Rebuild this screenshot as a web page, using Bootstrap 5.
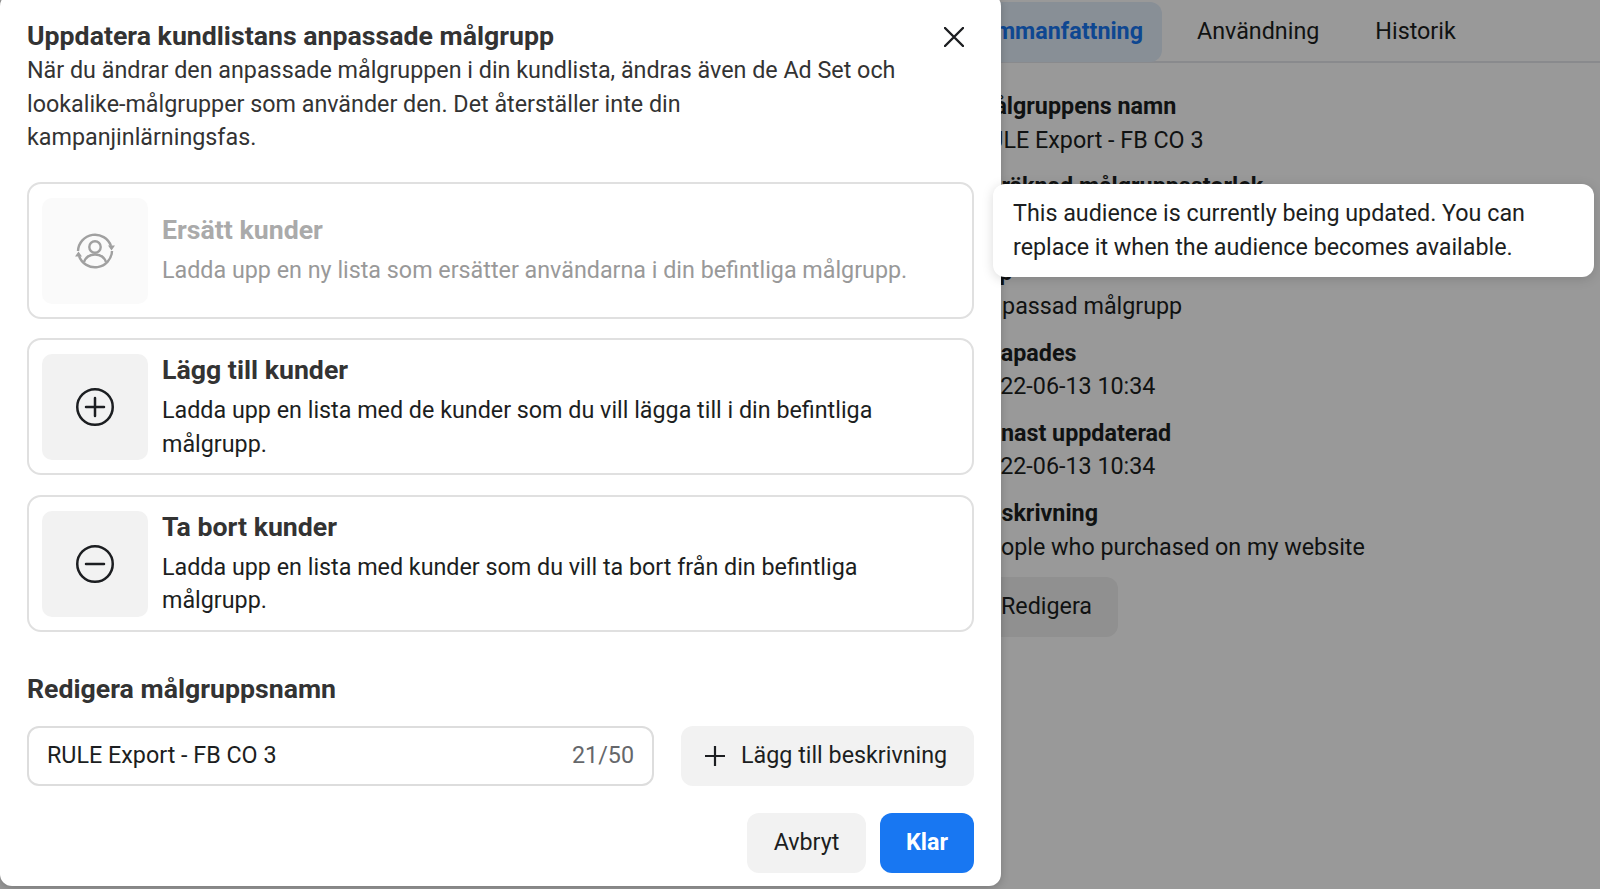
<!DOCTYPE html>
<html lang="sv">
<head>
<meta charset="utf-8">
<title>Uppdatera kundlista</title>
<link href="https://cdn.jsdelivr.net/npm/bootstrap@5.3.0/dist/css/bootstrap.min.css" rel="stylesheet">
<style>
html,body{height:100%;overflow:hidden}
body{font-family:Roboto,"Liberation Sans",sans-serif;font-size:23.3px;line-height:33.6px;color:#1c1e21;background:#fff}
.stage{position:relative;width:1600px;height:889px;overflow:hidden}
.behind{padding-left:974px}
.tabbar{height:63px;border-bottom:2px solid #e4e6eb;padding-top:2px;margin-left:0}
.tab-one{height:60px;padding:0 19px 0 0;margin-right:7px;background:#e3eefb;border-radius:12px;color:#1877f2;font-weight:700;display:flex;align-items:center;width:188px;justify-content:flex-end;white-space:nowrap;overflow:hidden}
.tab-two{padding:0 28px;height:60px;display:flex;align-items:center}
.facts{padding-top:27px}
.fact{margin-bottom:13px}
.fact-tall{margin-bottom:19px}
.fact-h{font-weight:700;white-space:nowrap}
.edit-btn{background:#f0f0f0;border-radius:12px;height:60px;width:144px;display:flex;align-items:center;justify-content:flex-end;padding-right:26px;margin-top:1px}
.dim{position:absolute;inset:0;background:rgba(0,0,0,.4)}
.sheet{position:absolute;left:0;top:-6px;width:1001px;height:892px;background:#fff;border-radius:12px;padding:25px 27px 0;box-shadow:0 2px 8px rgba(0,0,0,.2)}
.sheet-title{font-size:26.7px;font-weight:700;line-height:35px;color:#333;margin:0}
.sheet-intro{margin:0;width:875px;color:#333}
.close-x{position:absolute;left:944px;top:25px;width:20px;height:20px;border:0;background:none;padding:0;display:block}
.choices{margin-top:27px;width:947px;gap:19.5px}
.choice{border:2px solid #e0e0e0;border-radius:14px;height:137px;padding:13px;gap:14px;display:flex}
.icon-box{width:106px;height:106px;background:#f2f2f2;border-radius:10px;flex:none;display:flex;align-items:center;justify-content:center;margin-top:1px}
.choice-h{font-size:26.7px;font-weight:700;line-height:34px;color:#333;margin:0 0 7px}
.choice-p{margin:0;color:#1c1e21}
.choice.off .icon-box{background:#fafafa}
.choice.off .choice-h{color:#aaa;margin-bottom:7px}
.choice.off .choice-p{color:#999}
.choice.off .choice-body{padding-top:16px}
.name-h{font-size:26.7px;font-weight:700;line-height:34px;color:#333;margin:40px 0 20px}
.name-row{gap:27px;width:947px}
.name-field{width:627px;height:60px;border:2px solid #ddd;border-radius:12px;padding:0 18px;display:flex;align-items:center;justify-content:space-between}
.name-count{color:#65676b}
.grey-btn{background:#f2f2f2;border:0;border-radius:12px;color:#1c1e21;font-size:23.3px;height:60px;display:flex;align-items:center}
.add-btn{width:293px;padding:0 0 0 24px;gap:16px}
.foot{margin-top:27px;width:947px;gap:14px}
.foot-cancel{width:119px;justify-content:center}
.foot-done{width:94px;height:60px;background:#1877f2;border:0;border-radius:12px;color:#fff;font-size:23.3px;font-weight:700}
.tip{position:absolute;left:993px;top:184px;width:601px;height:93px;background:#fff;border-radius:12px;padding:13px 20px;box-shadow:0 2px 12px rgba(0,0,0,.15)}
</style>
</head>
<body>
<div class="stage">
  <div class="behind">
    <div class="tabbar d-flex">
      <div class="tab-one">Sammanfattning</div>
      <div class="tab-two">Användning</div>
      <div class="tab-two">Historik</div>
    </div>
    <div class="facts">
      <div class="fact"><div class="fact-h">Målgruppens namn</div><div>RULE Export - FB CO 3</div></div>
      <div class="fact fact-tall"><div class="fact-h">Beräknad målgruppsstorlek</div><div>Otillgänglig</div></div>
      <div class="fact"><div class="fact-h">Typ</div><div>Anpassad målgrupp</div></div>
      <div class="fact"><div class="fact-h">Skapades</div><div>2022-06-13 10:34</div></div>
      <div class="fact"><div class="fact-h">Senast uppdaterad</div><div>2022-06-13 10:34</div></div>
      <div class="fact"><div class="fact-h">Beskrivning</div><div>People who purchased on my website</div></div>
      <div class="edit-btn">Redigera</div>
    </div>
  </div>
  <div class="dim"></div>
  <div class="sheet">
    <h1 class="sheet-title">Uppdatera kundlistans anpassade målgrupp</h1>
    <p class="sheet-intro">När du ändrar den anpassade målgruppen i din kundlista, ändras även de Ad Set och lookalike-målgrupper som använder den. Det återställer inte din kampanjinlärningsfas.</p>
    <button class="close-x" type="button" aria-label="Stäng"><svg width="20" height="20" viewBox="0 0 20 20" fill="none" stroke="#1c1e21" stroke-width="2.4" stroke-linecap="round"><path d="M1 1l18 18M19 1L1 19"/></svg></button>
    <div class="choices d-flex flex-column">
      <div class="choice off">
        <div class="icon-box"><svg width="40" height="38" viewBox="0 0 40 38" fill="none" stroke="#a0a0a0" stroke-width="2.400" aria-hidden="true"><path d="M3 19A17 17 0 0 1 36 14"/><path d="M37 19A17 17 0 0 1 4 24"/><path d="M33 13.5h7l-3.500 5zM0 24.500h7l-3.500-5z" fill="#a0a0a0" stroke="none"/><circle cx="20" cy="15" r="5.700"/><path d="M9 30c2-5.500 6.500-7.500 11-7.500s9 2 11 7.500"/></svg></div>
        <div class="choice-body"><h2 class="choice-h">Ersätt kunder</h2><p class="choice-p">Ladda upp en ny lista som ersätter användarna i din befintliga målgrupp.</p></div>
      </div>
      <div class="choice">
        <div class="icon-box"><svg width="38" height="38" viewBox="0 0 38 38" fill="none" stroke="#1c1e21" stroke-width="2.500" stroke-linecap="round" aria-hidden="true"><circle cx="19" cy="19" r="17.750"/><path d="M19 10v18M10 19h18"/></svg></div>
        <div class="choice-body"><h2 class="choice-h">Lägg till kunder</h2><p class="choice-p">Ladda upp en lista med de kunder som du vill lägga till i din befintliga målgrupp.</p></div>
      </div>
      <div class="choice">
        <div class="icon-box"><svg width="38" height="38" viewBox="0 0 38 38" fill="none" stroke="#1c1e21" stroke-width="2.500" stroke-linecap="round" aria-hidden="true"><circle cx="19" cy="19" r="17.750"/><path d="M10 19h18"/></svg></div>
        <div class="choice-body"><h2 class="choice-h">Ta bort kunder</h2><p class="choice-p">Ladda upp en lista med kunder som du vill ta bort från din befintliga målgrupp.</p></div>
      </div>
    </div>
    <h2 class="name-h">Redigera målgruppsnamn</h2>
    <div class="name-row d-flex">
      <div class="name-field"><span>RULE Export - FB CO 3</span><span class="name-count">21/50</span></div>
      <button class="grey-btn add-btn" type="button"><svg width="20" height="20" viewBox="0 0 20 20" fill="none" stroke="#1c1e21" stroke-width="2.200" aria-hidden="true"><path d="M10 0v20M0 10h20"/></svg>Lägg till beskrivning</button>
    </div>
    <div class="foot d-flex justify-content-end">
      <button class="grey-btn foot-cancel" type="button">Avbryt</button>
      <button class="foot-done" type="button">Klar</button>
    </div>
  </div>
  <div class="tip">This audience is currently being updated. You can replace it when the audience becomes available.</div>
</div>
<script src="https://cdn.jsdelivr.net/npm/bootstrap@5.3.0/dist/js/bootstrap.bundle.min.js"></script>
</body>
</html>
